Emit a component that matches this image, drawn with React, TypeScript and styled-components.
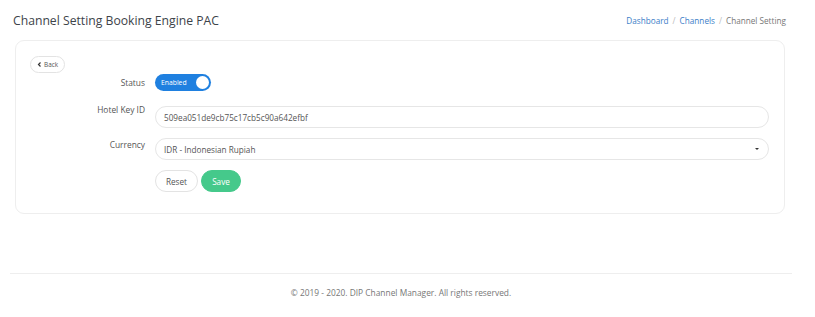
import styled, { createGlobalStyle } from 'styled-components';

const GlobalStyle = createGlobalStyle`
  body {
    margin: 0;
    background: #fff;
    font-family: 'Open Sans', 'DejaVu Sans', sans-serif;
    color: #555;
  }
`;

const Page = styled.div`
  width: 815px;
  height: 317px;
  display: flex;
  flex-direction: column;
`;

const Header = styled.header`
  display: flex;
  justify-content: space-between;
  align-items: center;
  height: 40px;
  padding: 0 29px 0 13px;
`;

const Title = styled.h1`
  margin: 0;
  font-size: 12.2px;
  font-weight: 400;
  color: #3d4349;
`;

const Crumbs = styled.nav`
  display: flex;
  gap: 4px;
  font-size: 8.2px;
  color: #777;
`;

const Crumb = styled.span<{ $link?: boolean }>`
  color: ${(p) => (p.$link ? '#3b7ec8' : '#777')};
`;

const Sep = styled.span`
  color: #bbb;
`;

const Card = styled.section`
  margin-left: 15px;
  width: 770px;
  height: 174px;
  box-sizing: border-box;
  border: 1px solid #eeeeee;
  border-radius: 9px;
  padding: 15px 15px 0 14px;
`;

const BackButton = styled.button`
  display: flex;
  align-items: center;
  gap: 2px;
  height: 17px;
  padding: 0 6px;
  border: 1px solid #e3e3e3;
  border-radius: 9px;
  background: #fff;
  font-family: inherit;
  font-size: 6.4px;
  color: #555;
`;

const Form = styled.div`
  display: grid;
  grid-template-columns: 115px 1fr;
  column-gap: 10px;
  align-items: center;
`;

const Label = styled.label`
  text-align: right;
  font-size: 8.4px;
  color: #555;
`;

const Row = styled.div<{ $h: number; $mt: number }>`
  height: ${(p) => p.$h}px;
  margin-top: ${(p) => p.$mt}px;
  display: flex;
  align-items: center;
`;

const Toggle = styled.div`
  width: 56px;
  height: 17px;
  box-sizing: border-box;
  border-radius: 9px;
  background: #1f80e0;
  display: flex;
  align-items: center;
  justify-content: space-between;
  padding: 0 2px 0 6px;
  color: #fff;
  font-size: 6.8px;
`;

const Knob = styled.span`
  width: 13px;
  height: 13px;
  border-radius: 50%;
  background: #fff;
`;

const Field = styled.div`
  flex: 1;
  height: 22px;
  box-sizing: border-box;
  border: 1px solid #e6e6e6;
  border-radius: 11px;
  display: flex;
  align-items: center;
  justify-content: space-between;
  padding: 0 9px 0 8px;
  font-size: 8.2px;
  color: #555;
`;

const Caret = styled.span`
  width: 0;
  height: 0;
  border-left: 2.5px solid transparent;
  border-right: 2.5px solid transparent;
  border-top: 2.5px solid #333;
`;

const Actions = styled.div`
  display: flex;
  gap: 3px;
`;

const Button = styled.button<{ $primary?: boolean }>`
  height: 22px;
  padding: 0;
  width: ${(p) => (p.$primary ? 40 : 43)}px;
  border-radius: 11px;
  border: 1px solid ${(p) => (p.$primary ? '#45c98b' : '#e3e3e3')};
  background: ${(p) => (p.$primary ? '#45c98b' : '#fff')};
  color: ${(p) => (p.$primary ? '#fff' : '#555')};
  font-family: inherit;
  font-size: 8.2px;
`;

const Footer = styled.footer`
  margin: 59px 23px 0 10px;
  border-top: 1px solid #eeeeee;
  padding-top: 13px;
  text-align: center;
  font-size: 8.4px;
  color: #777;
`;

export default function App() {
  return (
    <Page>
      <GlobalStyle />
      <Header>
        <Title>Channel Setting Booking Engine PAC</Title>
        <Crumbs>
          <Crumb $link>Dashboard</Crumb>
          <Sep>/</Sep>
          <Crumb $link>Channels</Crumb>
          <Sep>/</Sep>
          <Crumb>Channel Setting</Crumb>
        </Crumbs>
      </Header>
      <Card>
        <BackButton>
          <svg width="5" height="5" viewBox="0 0 10 10">
            <path d="M7 1 L3 5 L7 9" fill="none" stroke="#333" strokeWidth="2.4" />
          </svg>
          Back
        </BackButton>
        <Form>
          <Label>Status</Label>
          <Row $h={17} $mt={1}>
            <Toggle>
              Enabled
              <Knob />
            </Toggle>
          </Row>
          <Label>Hotel Key ID</Label>
          <Row $h={22} $mt={15}>
            <Field>509ea051de9cb75c17cb5c90a642efbf</Field>
          </Row>
          <Label>Currency</Label>
          <Row $h={22} $mt={10}>
            <Field>
              IDR - Indonesian Rupiah
              <Caret />
            </Field>
          </Row>
          <span />
          <Row $h={22} $mt={10}>
            <Actions>
              <Button>Reset</Button>
              <Button $primary>Save</Button>
            </Actions>
          </Row>
        </Form>
      </Card>
      <Footer>© 2019 - 2020. DIP Channel Manager. All rights reserved.</Footer>
    </Page>
  );
}
